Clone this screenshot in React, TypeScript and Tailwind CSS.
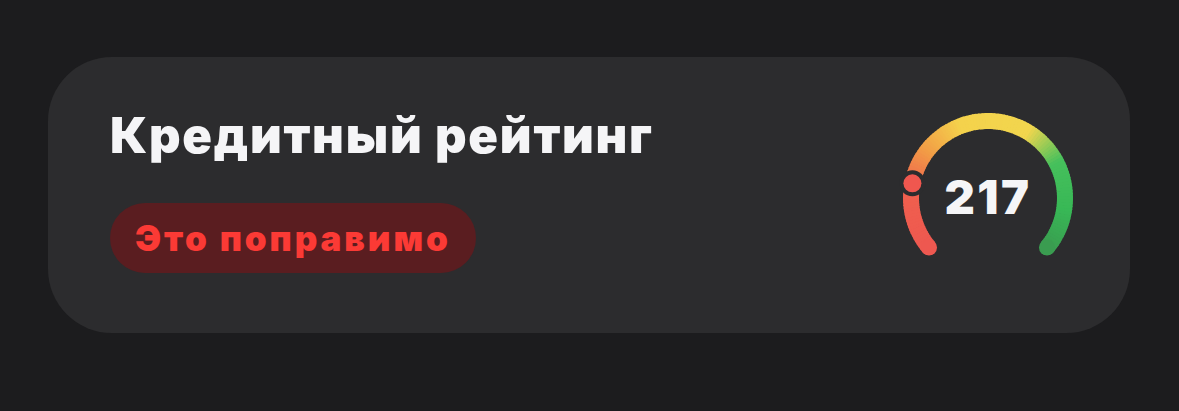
import React from "react";

// color stops along the gauge arc (t = 0 at the red end, 1 at the green end)
const stops: [number, [number, number, number]][] = [
  [0, [238, 88, 80]],
  [0.18, [240, 96, 78]],
  [0.3, [242, 158, 70]],
  [0.42, [244, 210, 76]],
  [0.62, [242, 214, 78]],
  [0.74, [70, 192, 92]],
  [0.88, [56, 184, 86]],
  [1, [58, 156, 80]],
];

function colorAt(t: number) {
  for (let i = 1; i < stops.length; i++) {
    const [t1, c1] = stops[i];
    const [t0, c0] = stops[i - 1];
    if (t <= t1) {
      const k = (t - t0) / (t1 - t0);
      const c = c0.map((v, j) => Math.round(v + (c1[j] - v) * k));
      return `rgb(${c[0]},${c[1]},${c[2]})`;
    }
  }
  const c = stops[stops.length - 1][1];
  return `rgb(${c[0]},${c[1]},${c[2]})`;
}

const CX = 90;
const CY = 90;
const R = 77;
const START = 140;
const END = 400;

function pt(deg: number) {
  const a = (deg * Math.PI) / 180;
  return [CX + R * Math.cos(a), CY + R * Math.sin(a)];
}

function Gauge({ value, marker }: { value: number; marker: number }) {
  const n = 120;
  const step = (END - START) / n;
  const segs = [];
  for (let i = 0; i < n; i++) {
    const a0 = START + i * step;
    const a1 = Math.min(a0 + step + 0.6, END);
    const [x0, y0] = pt(a0);
    const [x1, y1] = pt(a1);
    segs.push(
      <path
        key={i}
        d={`M ${x0} ${y0} A ${R} ${R} 0 0 1 ${x1} ${y1}`}
        stroke={colorAt((i + 0.5) / n)}
        strokeWidth={16}
        fill="none"
      />
    );
  }
  const [sx, sy] = pt(START);
  const [ex, ey] = pt(END);
  const [mx, my] = pt(marker);

  return (
    <div className="relative w-[180px] h-[180px]">
      <svg width="180" height="180" viewBox="0 0 180 180">
        {segs}
        <circle cx={sx} cy={sy} r={8} fill={colorAt(0)} />
        <circle cx={ex} cy={ey} r={8} fill={colorAt(1)} />
        <circle cx={mx} cy={my} r={13} fill="#2c2c2e" />
        <circle cx={mx} cy={my} r={9} fill="#f0574f" />
      </svg>
      <div className="absolute inset-0 flex items-center justify-center pb-[4px]">
        <span className="font-['Inter',sans-serif] font-black text-[47px] leading-none text-[#f5f5f7] tracking-[2.5px]">
          {value}
        </span>
      </div>
    </div>
  );
}

export default function App() {
  return (
    <div className="min-h-[411px] bg-[#1c1c1e] pt-[57px] px-[48px] pr-[49px]">
      <div className="h-[276px] rounded-[64px] bg-[#2c2c2e] flex items-start justify-between pl-[62px] pr-[52px]">
        <div className="flex flex-col items-start pt-[54px]">
          <h1 className="font-['Inter',sans-serif] font-black text-[49px] leading-none text-[#f5f5f7] tracking-[1.75px]">
            Кредитный рейтинг
          </h1>
          <div className="mt-[43px] h-[70px] px-[25px] rounded-full bg-[#5a1d20] flex items-center">
            <span className="font-['Inter',sans-serif] font-black text-[35px] leading-none text-[#fb3a35] tracking-[2.9px]">
              Это поправимо
            </span>
          </div>
        </div>
        <div className="mt-[51px]">
          <Gauge value={217} marker={191} />
        </div>
      </div>
    </div>
  );
}
